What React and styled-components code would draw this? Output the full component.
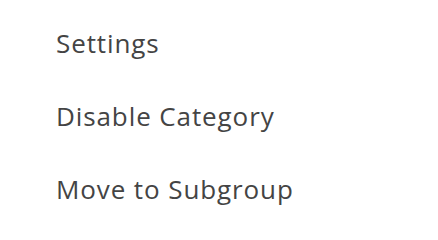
import React from "react";
import styled, { createGlobalStyle } from "styled-components";

const Global = createGlobalStyle`
  html, body { margin: 0; padding: 0; background: #ffffff; }
`;

const Menu = styled.ul`
  list-style: none;
  margin: 0;
  padding: 7px 0 0 56px;
  display: flex;
  flex-direction: column;
`;

const Item = styled.li`
  font-family: "Open Sans", sans-serif;
  font-size: 26px;
  line-height: 73.2px;
  letter-spacing: 0.9px;
  color: #444444;
  cursor: pointer;
`;

const items = ["Settings", "Disable Category", "Move to Subgroup"];

export default function App() {
  return (
    <>
      <Global />
      <Menu>
        {items.map((t) => (
          <Item key={t}>{t}</Item>
        ))}
      </Menu>
    </>
  );
}
